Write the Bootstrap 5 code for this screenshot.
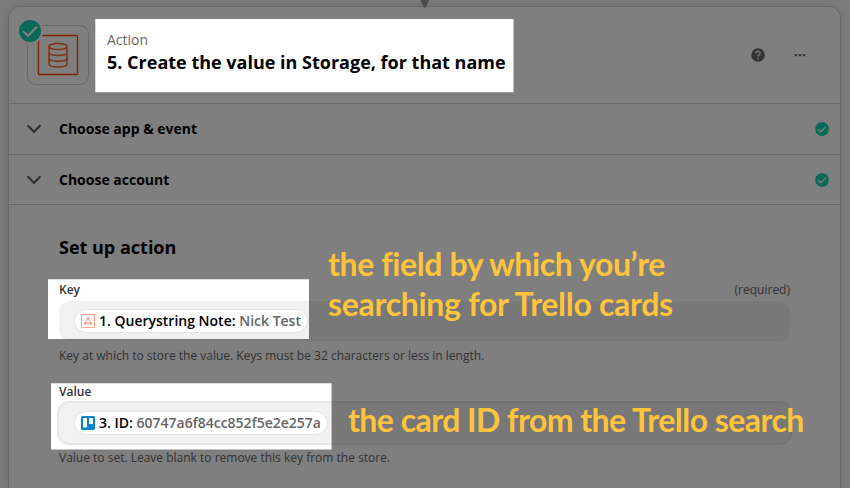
<!DOCTYPE html>
<html lang="en">
  <head>
    <meta charset="UTF-8" />
    <meta name="viewport" content="width=device-width, initial-scale=1" />
    <title>Create the value in Storage</title>
    <link
      href="https://cdn.jsdelivr.net/npm/bootstrap@5.3.0/dist/css/bootstrap.min.css"
      rel="stylesheet"
    />
    <style>
      body {
        height: 488px;
        overflow: hidden;
        background-color: #f9f9f9;
        color: #000;
        font-family: "Open Sans", "Noto Sans", sans-serif;
        font-size: 12px;
        line-height: 16px;
      }

      .editor {
        height: 488px;
        padding: 6px 9px 0 8px;
      }

      .step-card {
        height: 482px;
        border: 1px solid #cfcfcf;
        border-bottom: 0;
        border-radius: 12px 12px 0 0;
        box-shadow: 0 0 12px rgba(0, 0, 0, 0.12);
      }

      .step-head {
        height: 97px;
        padding: 0 34px 0 18px;
        border-bottom: 1px solid #cfcfcf;
      }

      .app-tile {
        width: 62px;
        height: 60px;
        border: 1px solid #cfcfcf;
        border-radius: 9px;
      }

      .tile-check {
        top: -8px;
        left: -11px;
      }

      .step-titles {
        margin-left: 18px;
        padding-bottom: 6px;
      }

      .step-kind {
        font-size: 14px;
        line-height: 20px;
        color: #666;
      }

      .step-name {
        font-size: 18px;
        line-height: 24px;
      }

      .help-icon {
        margin-right: 29px;
      }

      .section-row {
        height: 51px;
        padding: 0 11px 0 17px;
        border-bottom: 1px solid #cfcfcf;
        gap: 17px;
        font-size: 14px;
      }

      .section-row + .section-row {
        height: 50px;
      }

      .step-body {
        padding: 30px 50px 0;
      }

      .step-body h2 {
        font-size: 18px;
        line-height: 24px;
        margin-bottom: 23px;
      }

      .field-label {
        height: 19px;
        color: #333;
      }

      .field-label .required {
        color: #666;
      }

      .field-box {
        height: 40px;
        padding-left: 16px;
        border-radius: 12px;
        background-color: #f1f1f1;
      }

      .field-box.focused {
        height: 44px;
        margin: 0 -2px;
        border: 2px solid #e6e6e6;
      }

      .token {
        height: 22px;
        padding: 0 6px;
        gap: 4px;
        border-radius: 11px;
        background-color: #fff;
        box-shadow: 0 0 2px rgba(0, 0, 0, 0.16);
        font-size: 14px;
        white-space: nowrap;
      }

      .token span {
        color: #666;
      }

      .help-text {
        margin-top: 7px;
        color: #666;
      }

      .field-label.second {
        height: 17px;
        margin-top: 20px;
      }

      .focused + .help-text {
        margin-top: 5px;
      }

      /* dims everything except the three highlighted areas */
      .shade {
        inset: 0;
        background-color: rgba(0, 0, 0, 0.5);
        clip-path: path(
          evenodd,
          "M0 0H850V488H0Z M95.3 19H513.5V92.2H95.3Z M48 279.3H309V339H48Z M51 383.3H331.6V449.6H51Z"
        );
      }

      .note {
        color: #ffc33c;
        font-family: Lato, sans-serif;
        font-size: 32px;
        font-weight: 700;
        line-height: 40px;
        white-space: nowrap;
      }

      .note-key {
        left: 328px;
        top: 244px;
        letter-spacing: -0.4px;
      }

      .note-key span {
        letter-spacing: -0.3px;
      }

      .note-value {
        left: 348px;
        top: 400px;
        letter-spacing: -0.54px;
      }
    </style>
  </head>
  <body>
    <main class="editor position-relative">
      <div class="step-card bg-white">
        <div class="step-head d-flex align-items-center">
          <div class="app-tile position-relative d-flex align-items-center justify-content-center">
            <svg width="42" height="42" viewBox="0 0 42 42" fill="none" stroke="#ff4a00">
              <rect x="1.500" y="1.500" width="39" height="39" rx="1" stroke-width="1.400" />
              <g stroke-width="1.500" opacity="0.850">
                <ellipse cx="21" cy="12.500" rx="9" ry="3" />
                <path d="M12 12.500V30C12 34 30 34 30 30V12.500" />
                <path d="M12 18.500C12 22.500 30 22.500 30 18.500M12 24.300C12 28.300 30 28.300 30 24.300" />
              </g>
            </svg>
            <svg class="tile-check position-absolute" width="26" height="26" viewBox="0 0 26 26">
              <circle cx="13" cy="13" r="13" fill="#fff" />
              <circle cx="13" cy="13" r="11" fill="#13d0ac" />
              <path d="M6 13.200L11 17.800L20 8.700" fill="none" stroke="#fff" stroke-width="2.200" />
            </svg>
          </div>
          <div class="step-titles flex-grow-1">
            <div class="step-kind">Action</div>
            <div class="step-name fw-bold">5. Create the value in Storage, for that name</div>
          </div>
          <svg class="help-icon" width="14" height="14" viewBox="0 0 14 14">
            <circle cx="7" cy="7" r="6.800" fill="#666" />
            <path d="M4.900 5.500C4.900 2.400 9.200 2.500 9.200 5.200C9.200 6.900 7 6.800 7 8.700" fill="none" stroke="#fff" stroke-width="1.300" />
            <rect x="6.300" y="9.900" width="1.400" height="1.500" fill="#fff" />
          </svg>
          <svg width="12" height="4" viewBox="0 0 12 4" fill="#666">
            <rect x="0.700" y="0.900" width="2.400" height="2.400" rx="0.600" />
            <rect x="4.800" y="0.900" width="2.400" height="2.400" rx="0.600" />
            <rect x="8.900" y="0.900" width="2.400" height="2.400" rx="0.600" />
          </svg>
        </div>

        <div class="section-row d-flex align-items-center">
          <svg width="16" height="10" viewBox="0 0 16 10" fill="none" stroke="#666" stroke-width="2.300">
            <path d="M1.500 1.300L8 7.800L14.500 1.300" />
          </svg>
          <div class="fw-bold flex-grow-1">Choose app &amp; event</div>
          <svg width="14" height="14" viewBox="0 0 14 14">
            <circle cx="7" cy="7" r="6.900" fill="#13d0ac" />
            <path d="M3 7.200L5.700 9.800L11 4.600" fill="none" stroke="#fff" stroke-width="1.300" />
          </svg>
        </div>
        <div class="section-row d-flex align-items-center">
          <svg width="16" height="10" viewBox="0 0 16 10" fill="none" stroke="#666" stroke-width="2.300">
            <path d="M1.500 1.300L8 7.800L14.500 1.300" />
          </svg>
          <div class="fw-bold flex-grow-1">Choose account</div>
          <svg width="14" height="14" viewBox="0 0 14 14">
            <circle cx="7" cy="7" r="6.900" fill="#13d0ac" />
            <path d="M3 7.200L5.700 9.800L11 4.600" fill="none" stroke="#fff" stroke-width="1.300" />
          </svg>
        </div>

        <div class="step-body">
          <h2 class="fw-bold">Set up action</h2>

          <div class="field-label d-flex justify-content-between">
            <span class="fw-semibold">Key</span>
            <span class="required">(required)</span>
          </div>
          <div class="field-box d-flex align-items-center">
            <div class="token d-flex align-items-center fw-semibold">
              <svg width="14" height="14" viewBox="0 0 14 14" fill="none" stroke="#ffa584">
                <rect x="0.500" y="0.500" width="13" height="13" />
                <path d="M7 5L4.500 9M7 5L9.500 9M5 9.300H9" />
                <g fill="#ff9a76" stroke="none">
                  <circle cx="7" cy="4.700" r="1.400" />
                  <circle cx="4.400" cy="9.300" r="1.400" />
                  <circle cx="9.600" cy="9.300" r="1.400" />
                </g>
              </svg>
              <div>1. Querystring Note: <span>Nick Test</span></div>
            </div>
          </div>
          <div class="help-text">Key at which to store the value. Keys must be 32 characters or less in length.</div>

          <div class="field-label second fw-semibold">Value</div>
          <div class="field-box focused d-flex align-items-center">
            <div class="token d-flex align-items-center fw-semibold">
              <svg width="14" height="14" viewBox="0 0 14 14">
                <rect width="14" height="14" rx="1.500" fill="#0a84d0" />
                <rect x="2" y="2" width="4" height="9.500" rx="0.600" fill="#fff" />
                <rect x="8" y="2" width="4" height="6" rx="0.600" fill="#fff" />
              </svg>
              <div>3. ID: <span>60747a6f84cc852f5e2e257a</span></div>
            </div>
          </div>
          <div class="help-text">Value to set. Leave blank to remove this key from the store.</div>
        </div>
      </div>

      <!-- tip of the connector coming from the previous step -->
      <svg class="position-absolute top-0 start-50" width="12" height="9" viewBox="6 0 12 9" overflow="visible">
        <path d="M1.500 0H10L6.700 7.800H5Z" fill="#999" />
      </svg>

      <div class="shade position-absolute"></div>
      <div class="note note-key position-absolute">the field by which you’re<br /><span>searching for Trello cards</span></div>
      <div class="note note-value position-absolute">the card ID from the Trello search</div>
    </main>

    <script src="https://cdn.jsdelivr.net/npm/bootstrap@5.3.0/dist/js/bootstrap.bundle.min.js"></script>
  </body>
</html>
